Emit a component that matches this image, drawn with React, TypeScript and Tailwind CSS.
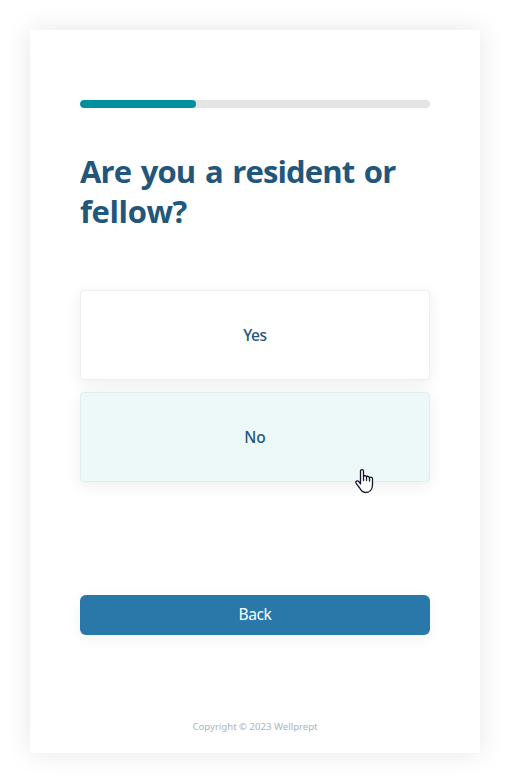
const options = [
  { label: "Yes", className: "bg-white border-[#eeeeee] tracking-[-0.4px]" },
  { label: "No", className: "bg-[#edf9f9] border-[#e0eeee]" },
];

function ProgressBar({ value }: { value: number }) {
  return (
    <div className="h-2 w-full overflow-hidden rounded bg-[#e4e4e4]">
      <div
        className="h-full rounded bg-[#008f9c]"
        style={{ width: `${value}%` }}
      />
    </div>
  );
}

function HandCursor() {
  return (
    <svg
      className="absolute left-[274px] top-[75px] h-[26px] w-5"
      viewBox="0 0 20 26"
      fill="none"
    >
      <path
        d="M5.500 16V3.200c0-2.200 3-2.200 3 0v5.300c.5-1.300 2.700-1.100 3 .4.6-1.100 2.600-.8 2.800.7.8-.9 3.200-.4 3.200 1.200v5.700c0 4.700-2.600 8-6.800 8-3.300 0-4.800-2-6-4.500L1.100 15.300c-.9-1.900 1.300-3.300 2.800-1.700L5.500 16Z"
        fill="#fff"
        stroke="#15152b"
        strokeWidth="1.300"
        strokeLinejoin="round"
      />
      <path
        d="M8.500 8v4.500M11.500 9v3.500M14.500 9.600v3.400"
        stroke="#15152b"
        strokeWidth="1.300"
        strokeLinecap="round"
      />
    </svg>
  );
}

export default function App() {
  return (
    <div className="h-[781px] w-[512px] overflow-hidden bg-white p-[30px] font-['Noto_Sans','Open_Sans',sans-serif] text-[#23567b]">
      <main className="flex h-[723px] w-[450px] flex-col bg-white px-[50px] pt-[70px] shadow-[0_0_25px_rgba(0,0,0,0.1)]">
        <ProgressBar value={33.2} />
        <h1 className="mt-[43px] h-[81px] whitespace-nowrap font-['Open_Sans',sans-serif] text-[31px] font-bold leading-10 tracking-[-0.9px] [word-spacing:2.5px]">
          Are you a resident or
          <br />
          <span className="tracking-[-0.4px]">fellow?</span>
        </h1>
        <div className="mt-[58px] flex flex-col gap-3">
          {options.map(({ label, className }) => (
            <div
              key={label}
              className={`relative flex h-[90px] items-center justify-center rounded border pt-0.5 text-[15.5px] font-medium shadow-[0_4px_16px_rgba(0,0,0,0.07)] ${className}`}
            >
              {label}
              {label === "No" && <HandCursor />}
            </div>
          ))}
        </div>
        <button className="mt-[113px] h-10 rounded-md bg-[#2a77aa] text-[15.5px] tracking-[-0.4px] text-white shadow-[0_4px_16px_rgba(0,0,0,0.05)]">
          Back
        </button>
        <footer className="mt-[84px] text-center text-[9.6px] leading-4 text-[#a6b5c3]">
          Copyright © 2023 Wellprept
        </footer>
      </main>
    </div>
  );
}
